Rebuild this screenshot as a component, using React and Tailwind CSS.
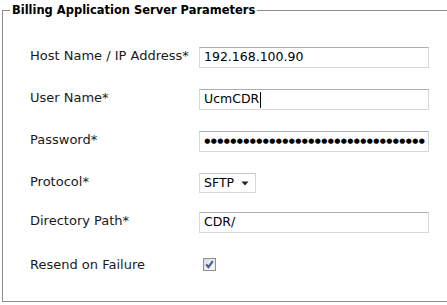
import React from "react";

const font = { fontFamily: "'DejaVu Sans', sans-serif" };
const legendFont = { fontFamily: "'DejaVu Sans Condensed', 'DejaVu Sans', sans-serif" };

function Field({ children, className = "" }) {
    return (
        <div
            className={`flex h-[21px] w-[230px] items-center border border-[#d7d7d7] border-t-[#abadb3] bg-white pl-[4px] text-[12.5px] leading-none text-black ${className}`}
        >
            {children}
        </div>
    );
}

function Row({ label, children, className = "" }) {
    return (
        <div className={`flex items-start ${className}`}>
            <div className="w-[169px] pt-[1px] text-[13px] leading-[16px] text-[#1a1a1a]">{label}</div>
            {children}
        </div>
    );
}

export default function App() {
    const dots = Array.from({ length: 34 });
    return (
        <div className="h-[305px] w-[447px] overflow-hidden bg-white" style={font}>
            <fieldset className="mt-[2px] ml-[2px] h-[300px] w-[470px] border border-[#8a8a8a] pl-[7px]">
                <legend
                    className="px-[2px] text-[12.75px] leading-[16px] font-bold text-black"
                    style={legendFont}
                >
                    Billing Application Server Parameters
                </legend>
                <div className="pl-[20px] pt-[29px]">
                    <Row label="Host Name / IP Address*">
                        <Field>192.168.100.90</Field>
                    </Row>
                    <Row label="User Name*" className="mt-[21px]">
                        <Field>
                            UcmCDR
                            <span className="ml-px inline-block h-[16px] w-px bg-black" />
                        </Field>
                    </Row>
                    <Row label="Password*" className="mt-[21px]">
                        <Field className="pl-[3px]">
                            {dots.map((_, i) => (
                                <span key={i} className="inline-block w-[6.5px] text-center text-[7px] leading-none">
                                    ●
                                </span>
                            ))}
                        </Field>
                    </Row>
                    <Row label="Protocol*" className="mt-[21px]">
                        <div className="flex h-[20px] w-[57px] items-center border border-[#d7d7d7] border-t-[#c4c4c4] bg-white pl-[4px] text-[12.5px] leading-none text-black">
                            <span>SFTP</span>
                            <svg className="ml-[7px]" width="8" height="5" viewBox="0 0 8 5">
                                <path d="M0.5 0.5 H7.5 L4 4.5 Z" fill="#222" />
                            </svg>
                        </div>
                    </Row>
                    <Row label="Directory Path*" className="mt-[19px]">
                        <Field>CDR/</Field>
                    </Row>
                    <Row label="Resend on Failure" className="mt-[23px]">
                        <div className="ml-[4px] mt-[2px]">
                            <svg width="13" height="13" viewBox="0 0 13 13">
                                <defs>
                                    <linearGradient id="cb" x1="0" y1="0" x2="1" y2="1">
                                        <stop offset="0" stopColor="#dcdcd6" />
                                        <stop offset="1" stopColor="#f8f8f6" />
                                    </linearGradient>
                                </defs>
                                <rect x="0.5" y="0.5" width="12" height="12" fill="url(#cb)" stroke="#8e8f8f" />
                                <path d="M3.2 6.4 L5.4 9.2 L9.8 3.2" fill="none" stroke="#3f55a8" strokeWidth="2" />
                            </svg>
                        </div>
                    </Row>
                </div>
            </fieldset>
        </div>
    );
}
